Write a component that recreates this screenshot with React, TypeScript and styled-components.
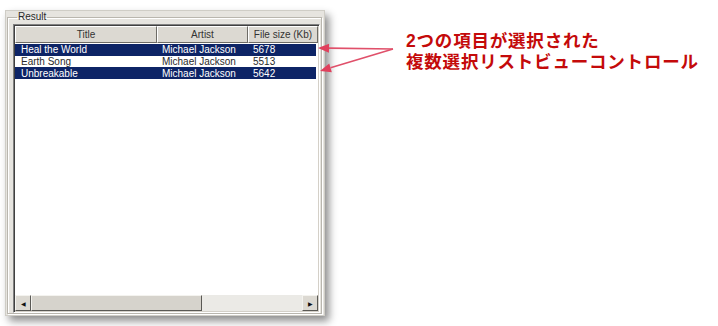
import React from "react";
import styled, { createGlobalStyle } from "styled-components";

const GlobalStyle = createGlobalStyle`
  html, body {
    margin: 0;
    padding: 0;
    background: #ffffff;
  }
  body {
    font-family: "Liberation Sans", Arial, sans-serif;
    width: 718px;
    height: 326px;
    overflow: hidden;
  }
`;

const Page = styled.div`
  position: relative;
  display: flex;
  align-items: flex-start;
  padding: 10px 0 0 5px;
  height: 326px;
  box-sizing: border-box;
`;

const Panel = styled.div`
  width: 320px;
  height: 306px;
  box-sizing: border-box;
  background: #e6e4df;
  border: 1px solid #cfcdc6;
  box-shadow: 4px 5px 8px rgba(0, 0, 0, 0.45);
  padding: 0 2px 1px 1px;
  display: flex;
`;

const Group = styled.fieldset`
  flex: 1;
  margin: 0;
  padding: 1px 3px 0 5px;
  border: 1px solid #b9b6ae;
  box-shadow: inset 1px 1px 0 #ffffff, 1px 1px 0 #ffffff;
  display: flex;
  min-width: 0;
`;

const Legend = styled.legend`
  font-size: 10px;
  color: #2a2a2a;
  padding: 0 1px;
  margin-left: 4px;
  line-height: 12px;
`;

const ListView = styled.div`
  flex: 1;
  display: flex;
  flex-direction: column;
  background: #ffffff;
  border: 1px solid #808080;
  border-right-color: #ffffff;
  border-bottom-color: #ffffff;
  box-shadow: inset 1px 1px 0 #404040, inset -1px -1px 0 #d4d0c8;
  padding: 1px;
`;

const HeaderRow = styled.div`
  display: flex;
  height: 17px;
`;

const HeaderCell = styled.div<{ $w: number }>`
  width: ${(p) => p.$w}px;
  flex: 0 0 auto;
  box-sizing: border-box;
  background: #dcd9d2;
  border: 1px solid #ffffff;
  border-right-color: #6e6c66;
  border-bottom-color: #6e6c66;
  font-size: 10px;
  color: #333;
  display: flex;
  align-items: center;
  justify-content: center;
`;

const Rows = styled.div`
  flex: 1;
  padding-top: 1px;
`;

const Row = styled.div<{ $selected?: boolean }>`
  display: flex;
  height: 11.7px;
  align-items: center;
  background: ${(p) => (p.$selected ? "#0d2466" : "transparent")};
  color: ${(p) => (p.$selected ? "#ffffff" : "#2a2a2a")};
  font-size: 10px;
  margin-right: 2px;
`;

const Cell = styled.div<{ $w: number }>`
  width: ${(p) => p.$w}px;
  flex: 0 0 auto;
  padding-left: ${(p) => (p.$w > 100 ? 6 : 5)}px;
  box-sizing: border-box;
  white-space: nowrap;
`;

const ScrollBar = styled.div`
  display: flex;
  height: 16px;
  background: #ebeae6;
`;

const ScrollButton = styled.div`
  width: 16px;
  box-sizing: border-box;
  background: #dcd9d2;
  border: 1px solid #f4f3ef;
  border-right-color: #5a5955;
  border-bottom-color: #5a5955;
  display: flex;
  align-items: center;
  justify-content: center;
  font-size: 6px;
  color: #111;
`;

const Thumb = styled.div`
  width: 171px;
  box-sizing: border-box;
  background: #d6d3cc;
  border: 1px solid #f4f3ef;
  border-right-color: #5a5955;
  border-bottom-color: #5a5955;
`;

const Track = styled.div`
  flex: 1;
`;

const Note = styled.div`
  margin: 21px 0 0 81px;
  font-family: "Liberation Sans", "Noto Sans CJK JP", sans-serif;
  font-weight: 700;
  font-size: 17.5px;
  line-height: 21px;
  color: #c40a0a;
  letter-spacing: 0.8px;
`;

const NoteLine = styled.div`
  white-space: nowrap;
`;

const Arrows = styled.svg`
  position: absolute;
  left: 0;
  top: 0;
  pointer-events: none;
`;

const cols = [142, 91, 70];

const data = [
  { title: "Heal the World", artist: "Michael Jackson", size: "5678", sel: true },
  { title: "Earth Song", artist: "Michael Jackson", size: "5513", sel: false },
  { title: "Unbreakable", artist: "Michael Jackson", size: "5642", sel: true },
];

const Arrow = ({ x1, y1, x2, y2 }: { x1: number; y1: number; x2: number; y2: number }) => {
  const a = Math.atan2(y2 - y1, x2 - x1);
  const len = 11;
  const wid = 4.5;
  const bx = x2 - Math.cos(a) * len;
  const by = y2 - Math.sin(a) * len;
  const px = -Math.sin(a) * wid;
  const py = Math.cos(a) * wid;
  return (
    <g>
      <line x1={x1} y1={y1} x2={bx} y2={by} stroke="#e0506a" strokeWidth={1.6} />
      <polygon
        points={`${x2},${y2} ${bx + px},${by + py} ${bx - px},${by - py}`}
        fill="#e0405c"
      />
    </g>
  );
};

export default function App() {
  return (
    <>
      <GlobalStyle />
      <Page>
        <Panel>
          <Group>
            <Legend>Result</Legend>
            <ListView>
              <HeaderRow>
                <HeaderCell $w={cols[0]}>Title</HeaderCell>
                <HeaderCell $w={cols[1]}>Artist</HeaderCell>
                <HeaderCell $w={cols[2]}>File size (Kb)</HeaderCell>
              </HeaderRow>
              <Rows>
                {data.map((r) => (
                  <Row key={r.title} $selected={r.sel}>
                    <Cell $w={cols[0]}>{r.title}</Cell>
                    <Cell $w={cols[1]}>{r.artist}</Cell>
                    <Cell $w={cols[2] - 2}>{r.size}</Cell>
                  </Row>
                ))}
              </Rows>
              <ScrollBar>
                <ScrollButton>◀</ScrollButton>
                <Thumb />
                <Track />
                <ScrollButton>▶</ScrollButton>
              </ScrollBar>
            </ListView>
          </Group>
        </Panel>
        <Note>
          <NoteLine>2つの項目が選択された</NoteLine>
          <NoteLine>複数選択リストビューコントロール</NoteLine>
        </Note>
        <Arrows width="718" height="326">
          <Arrow x1={393} y1={49} x2={318} y2={48} />
          <Arrow x1={393} y1={49} x2={320} y2={71} />
        </Arrows>
      </Page>
    </>
  );
}
